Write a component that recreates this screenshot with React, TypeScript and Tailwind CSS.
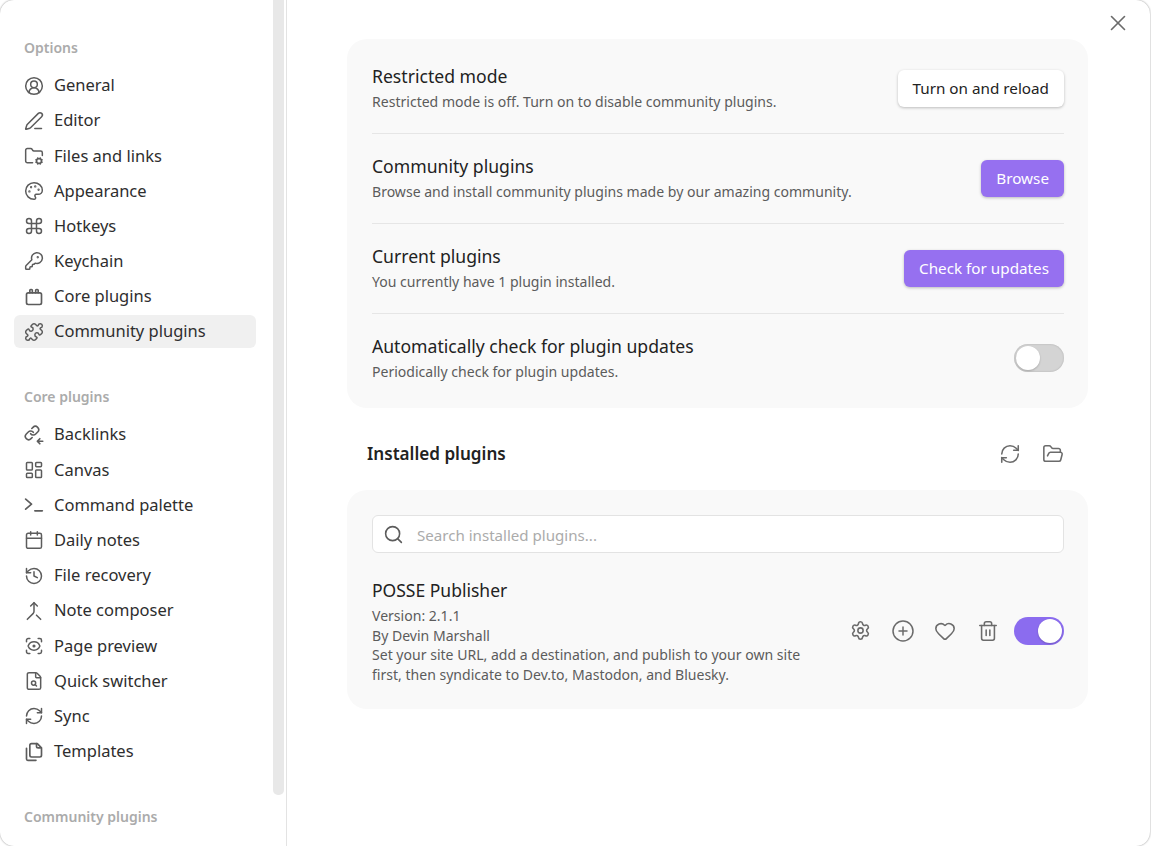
import React from 'react';
import {
  CircleUserRound,
  PenLine,
  FolderCog,
  Palette,
  Command,
  KeyRound,
  Puzzle,
  LayoutDashboard,
  Calendar,
  History,
  Merge,
  ScanEye,
  FileSearch,
  RefreshCw,
  X,
  FolderOpen,
  Search,
  Settings,
  CirclePlus,
  Heart,
  Trash2,
} from 'lucide-react';

type IconType = React.FC<{ className?: string; strokeWidth?: number }>;

const CorePluginsIcon: IconType = ({ className }) => (
  <svg viewBox="0 0 24 24" fill="none" stroke="currentColor" strokeWidth={2} strokeLinecap="round" strokeLinejoin="round" className={className}>
    <rect x="3" y="7" width="18" height="14" rx="2" />
    <path d="M7 7V4a1 1 0 0 1 1-1h1a1 1 0 0 1 1 1v3" />
    <path d="M14 7V4a1 1 0 0 1 1-1h1a1 1 0 0 1 1 1v3" />
  </svg>
);

const BacklinksIcon: IconType = ({ className }) => (
  <svg viewBox="0 0 24 24" fill="none" stroke="currentColor" strokeWidth={2} strokeLinecap="round" strokeLinejoin="round" className={className}>
    <g transform="translate(0 0) scale(0.8)" strokeWidth={2.4}>
      <path d="M10 13a5 5 0 0 0 7.54.54l3-3a5 5 0 0 0-7.07-7.07l-1.72 1.71" />
      <path d="M14 11a5 5 0 0 0-7.54-.54l-3 3a5 5 0 0 0 7.07 7.07l1.71-1.71" />
    </g>
    <path d="M22.5 19.5H16M19 16.5l-3 3 3 3" />
  </svg>
);

const PromptIcon: IconType = ({ className }) => (
  <svg viewBox="0 0 24 24" fill="none" stroke="currentColor" strokeWidth={2} strokeLinecap="round" strokeLinejoin="round" className={className}>
    <path d="m2 5 7 6-7 6" />
    <path d="M13 19h9" />
  </svg>
);

const TemplatesIcon: IconType = ({ className }) => (
  <svg viewBox="0 0 24 24" fill="none" stroke="currentColor" strokeWidth={2} strokeLinecap="round" strokeLinejoin="round" className={className}>
    <path d="M20 7h-3a2 2 0 0 1-2-2V2" />
    <path d="M9 18a2 2 0 0 1-2-2V4a2 2 0 0 1 2-2h7l5 5v9a2 2 0 0 1-2 2Z" />
    <path d="M3 7.6v12.8A1.6 1.6 0 0 0 4.6 22h9.8" />
  </svg>
);

const optionItems: { label: string; icon: IconType; active?: boolean }[] = [
  { label: 'General', icon: CircleUserRound },
  { label: 'Editor', icon: PenLine },
  { label: 'Files and links', icon: FolderCog },
  { label: 'Appearance', icon: Palette },
  { label: 'Hotkeys', icon: Command },
  { label: 'Keychain', icon: KeyRound },
  { label: 'Core plugins', icon: CorePluginsIcon },
  { label: 'Community plugins', icon: Puzzle, active: true },
];

const coreItems: { label: string; icon: IconType }[] = [
  { label: 'Backlinks', icon: BacklinksIcon },
  { label: 'Canvas', icon: LayoutDashboard },
  { label: 'Command palette', icon: PromptIcon },
  { label: 'Daily notes', icon: Calendar },
  { label: 'File recovery', icon: History },
  { label: 'Note composer', icon: Merge },
  { label: 'Page preview', icon: ScanEye },
  { label: 'Quick switcher', icon: FileSearch },
  { label: 'Sync', icon: RefreshCw },
  { label: 'Templates', icon: TemplatesIcon },
];

const NavItem = ({ label, icon: Icon, active }: { label: string; icon: IconType; active?: boolean }) => (
  <div className={`flex h-[33px] mb-[2.2px] items-center gap-[10px] rounded-[6px] pl-[10px] text-[16.5px] text-[#2e2e2e] ${active ? 'bg-[#f0f0f0]' : ''}`}>
    <Icon className="h-[20px] w-[20px] text-[#5c5c5c]" strokeWidth={1.8} />
    <span>{label}</span>
  </div>
);

const SectionLabel = ({ children, className }: { children: React.ReactNode; className?: string }) => (
  <div className={`pl-[10px] text-[14px] font-semibold text-[#ababab] ${className ?? ''}`}>{children}</div>
);

const SettingRow = ({
  title,
  desc,
  children,
  last,
}: {
  title: string;
  desc: string;
  children: React.ReactNode;
  last?: boolean;
}) => (
  <div className={`flex h-[90px] items-center justify-between ${last ? '' : 'border-b border-[#e6e6e6]'}`}>
    <div className="flex flex-col gap-[2px]">
      <div className="text-[17.6px] leading-[24px] text-[#222222]">{title}</div>
      <div className="text-[14.05px] leading-[24px] text-[#5c5c5c]">{desc}</div>
    </div>
    {children}
  </div>
);

const Toggle = ({ on, className }: { on?: boolean; className?: string }) => (
  <div className={`flex h-[28px] w-[50px] items-center rounded-full px-[2px] ${on ? 'justify-end bg-[#8b6cef]' : 'justify-start bg-[#d4d4d4] shadow-[inset_0_0_2px_rgba(0,0,0,0.2)]'} ${className ?? ''}`}>
    <div className="h-[24px] w-[24px] rounded-full bg-white shadow-[0_1px_2px_rgba(0,0,0,0.2)]" />
  </div>
);

const PurpleButton = ({ children }: { children: React.ReactNode }) => (
  <button className="h-[37px] rounded-[6px] bg-[#9670f0] px-[15px] text-[15.25px] text-white shadow-[0_1px_3px_rgba(0,0,0,0.25)]">
    {children}
  </button>
);

export default function App() {
  return (
    <div className="h-[846px] w-[1151px] overflow-hidden bg-white font-['Noto_Sans','Open_Sans',sans-serif]">
      <div className="flex h-full w-[1149.5px] overflow-hidden rounded-[14px] bg-white shadow-[0_0_2px_rgba(0,0,0,0.45)]">
        <aside className="relative h-full w-[287px] shrink-0 border-r border-[#e3e3e3] pl-[14px] pr-[30px] pt-[37px]">
          <SectionLabel className="mb-[11px]">Options</SectionLabel>
          {optionItems.map((item) => (
            <NavItem key={item.label} {...item} />
          ))}
          <SectionLabel className="mb-[11px] mt-[38px]">Core plugins</SectionLabel>
          {coreItems.map((item) => (
            <NavItem key={item.label} {...item} />
          ))}
          <SectionLabel className="mt-[38px]">Community plugins</SectionLabel>
          <div className="absolute right-[2px] top-0 h-[795px] w-[11px] rounded-b-[5px] bg-[#e8e8e8]" />
        </aside>

        <main className="relative flex-1 pl-[60px] pt-[39px]">
          <button className="absolute right-[18.5px] top-[10px] text-[#6b6b6b]">
            <X className="h-[26px] w-[26px]" strokeWidth={1.5} />
          </button>

          <section className="w-[741px] rounded-[20px] bg-[#f9f9f9] pb-[4px] pl-[25px] pr-[24px] pt-[5px]">
            <SettingRow title="Restricted mode" desc="Restricted mode is off. Turn on to disable community plugins.">
              <button className="h-[37px] rounded-[6px] bg-white px-[15px] text-[15.25px] text-[#222222] shadow-[0_1px_3px_rgba(0,0,0,0.25)]">
                Turn on and reload
              </button>
            </SettingRow>
            <SettingRow title="Community plugins" desc="Browse and install community plugins made by our amazing community.">
              <PurpleButton>Browse</PurpleButton>
            </SettingRow>
            <SettingRow title="Current plugins" desc="You currently have 1 plugin installed.">
              <PurpleButton>Check for updates</PurpleButton>
            </SettingRow>
            <SettingRow title="Automatically check for plugin updates" desc="Periodically check for plugin updates." last>
              <Toggle className="mb-[2px]" />
            </SettingRow>
          </section>

          <div className="flex h-[82px] w-[741px] items-center justify-between pl-[20px] pr-[24px] pt-[10px]">
            <h2 className="text-[17.1px] font-semibold text-[#222222]">Installed plugins</h2>
            <div className="flex items-center gap-[21px] text-[#6b6b6b]">
              <RefreshCw className="h-[22px] w-[22px]" strokeWidth={1.7} />
              <FolderOpen className="h-[22px] w-[22px]" strokeWidth={1.7} />
            </div>
          </div>

          <section className="h-[219px] w-[741px] rounded-[20px] bg-[#f9f9f9] pl-[25px] pr-[24px] pt-[25px]">
            <div className="flex h-[38px] items-center gap-[13px] rounded-[6px] border border-[#e3e3e3] bg-white pl-[10px] text-[#ababab]">
              <Search className="h-[21px] w-[21px] text-[#5c5c5c]" strokeWidth={1.8} />
              <span className="mt-[2px] text-[15.1px]">Search installed plugins...</span>
            </div>
            <div className="mt-[24px] flex items-center justify-between">
              <div className="w-[445px]">
                <div className="text-[17.5px] leading-[26px] text-[#222222]">POSSE Publisher</div>
                <div className="mt-[3px] text-[14.05px] leading-[19.5px] text-[#5c5c5c]">
                  <div>Version: 2.1.1</div>
                  <div>By Devin Marshall</div>
                  <div>Set your site URL, add a destination, and publish to your own site first, then syndicate to Dev.to, Mastodon, and Bluesky.</div>
                </div>
              </div>
              <div className="flex items-center text-[#6b6b6b]">
                <Settings className="mr-[20px] h-[21px] w-[21px]" strokeWidth={1.8} />
                <CirclePlus className="mr-[19px] h-[24px] w-[24px]" strokeWidth={1.5} />
                <Heart className="mr-[21px] h-[22px] w-[22px]" strokeWidth={1.7} />
                <Trash2 className="mr-[15px] h-[22px] w-[22px]" strokeWidth={1.7} />
                <Toggle on />
              </div>
            </div>
          </section>
        </main>
      </div>
    </div>
  );
}
